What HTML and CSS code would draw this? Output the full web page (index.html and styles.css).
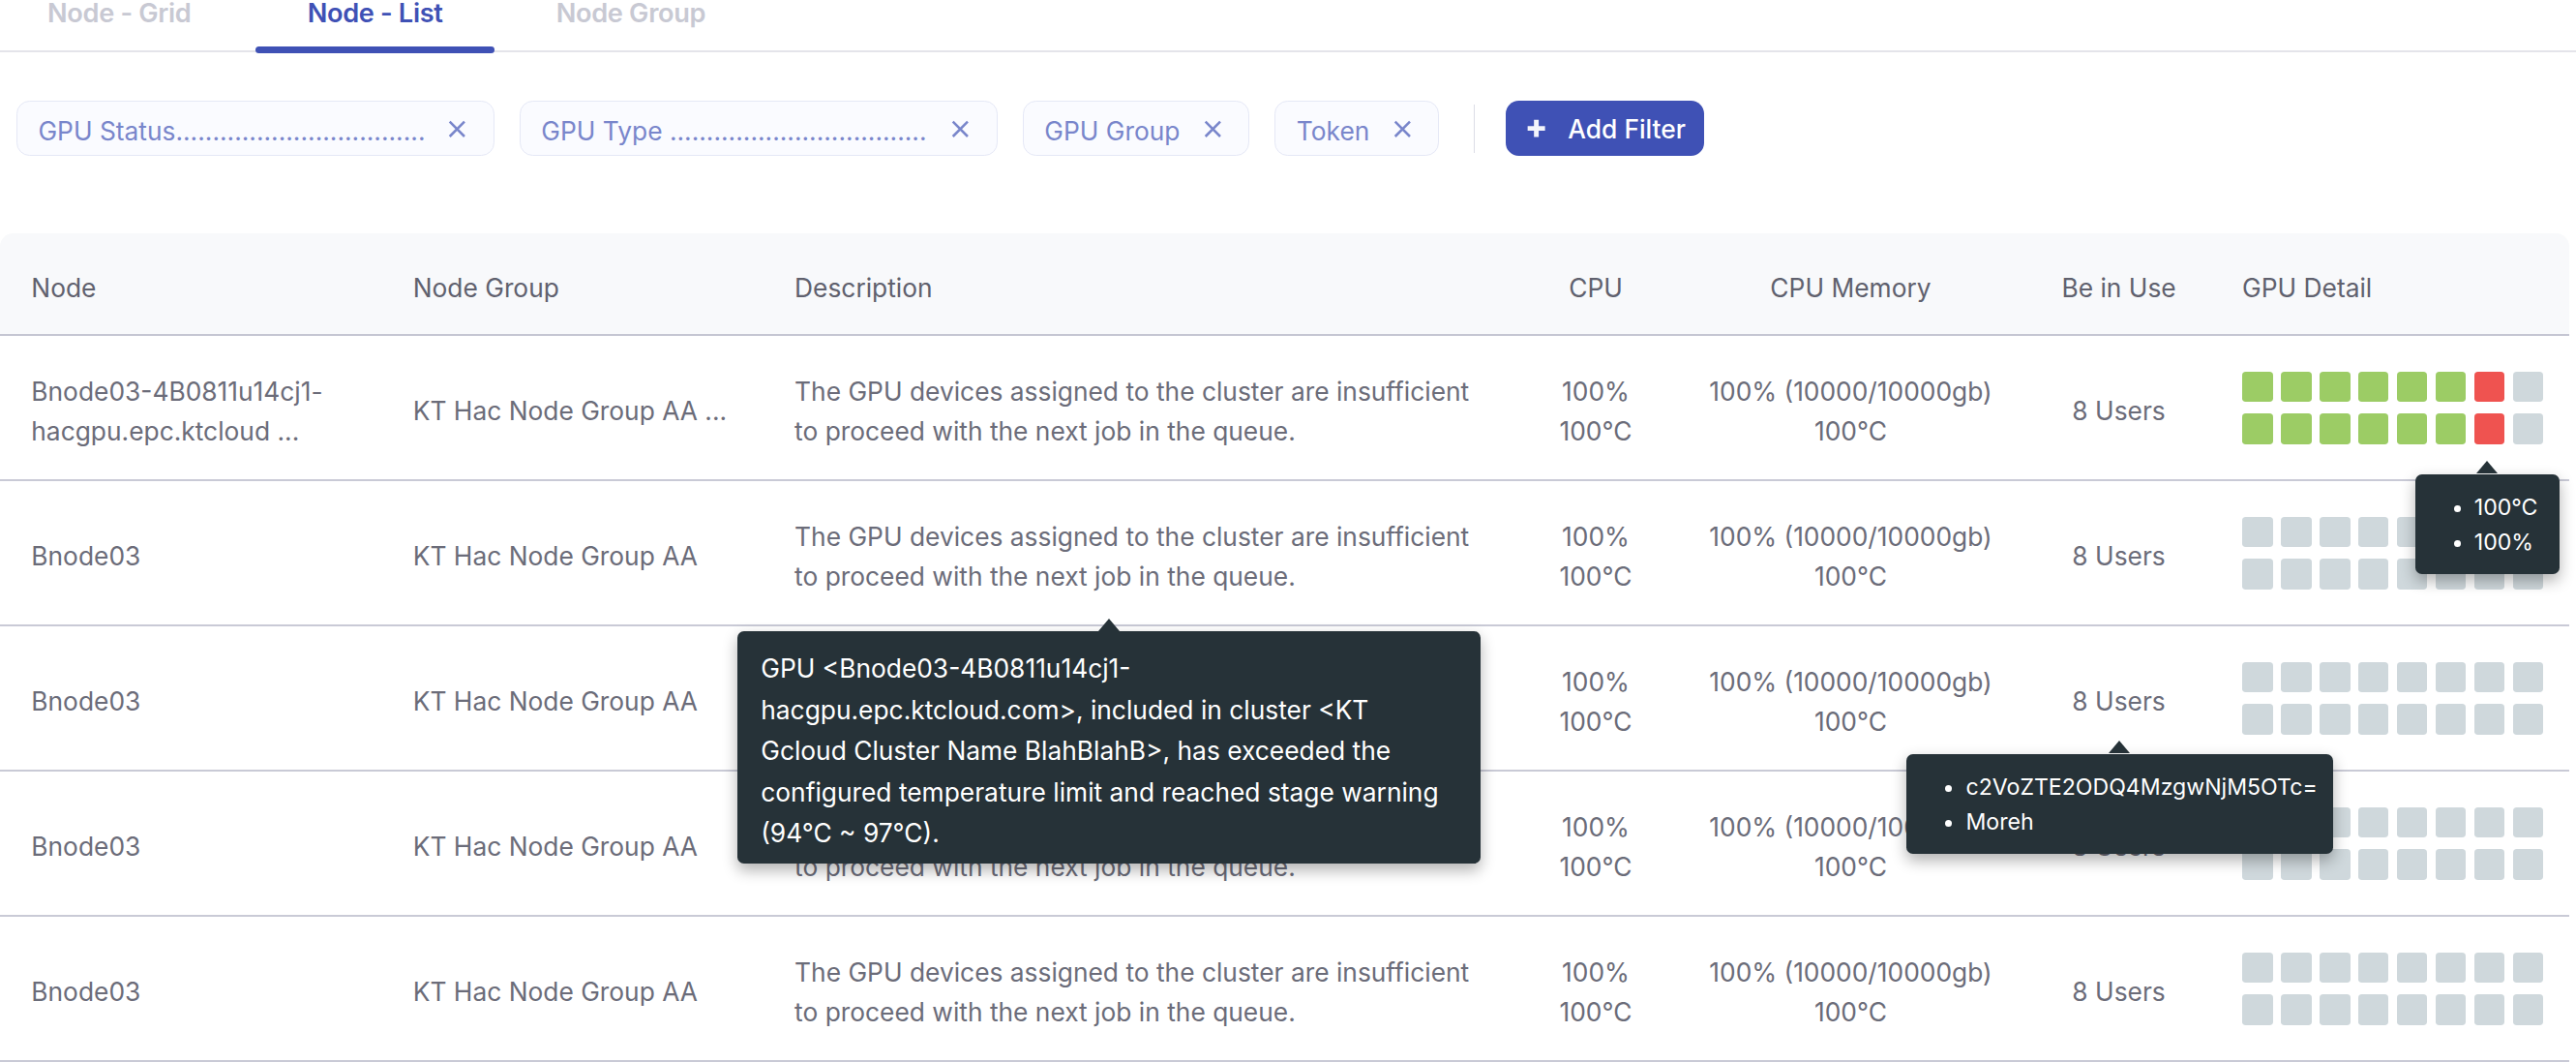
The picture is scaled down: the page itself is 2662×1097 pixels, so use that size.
FILE: index.html
```html
<!DOCTYPE html>
<html lang="en">
<head>
<meta charset="utf-8">
<title>Node - List</title>
<link rel="stylesheet" href="styles.css">
</head>
<body>
<div class="page">
  <nav class="tabs">
    <a class="tab">Node - Grid</a>
    <a class="tab active">Node - List</a>
    <a class="tab">Node Group</a>
  </nav>

  <div class="filters">
    <div class="chip chip-wide"><span class="chip-label">GPU Status.......................................................................</span><svg class="chip-x" viewBox="0 0 11 11"><path d="M1 1L10 10M10 1L1 10"/></svg></div>
    <div class="chip chip-wide"><span class="chip-label">GPU Type .......................................................................</span><svg class="chip-x" viewBox="0 0 11 11"><path d="M1 1L10 10M10 1L1 10"/></svg></div>
    <div class="chip"><span class="chip-label">GPU Group</span><svg class="chip-x" viewBox="0 0 11 11"><path d="M1 1L10 10M10 1L1 10"/></svg></div>
    <div class="chip"><span class="chip-label">Token</span><svg class="chip-x" viewBox="0 0 11 11"><path d="M1 1L10 10M10 1L1 10"/></svg></div>
    <div class="sep"></div>
    <button class="add-btn"><svg class="plus" viewBox="0 0 13 13"><path d="M6.5 1V12M1 6.5H12"/></svg><span class="btn-label">Add Filter</span></button>
  </div>

  <div class="table">
    <div class="row head">
      <div class="cell">Node</div>
      <div class="cell">Node Group</div>
      <div class="cell">Description</div>
      <div class="cell c">CPU</div>
      <div class="cell c">CPU Memory</div>
      <div class="cell c">Be in Use</div>
      <div class="cell gpu-head">GPU Detail</div>
    </div>

    <div class="row">
      <div class="cell">Bnode03-4B0811u14cj1-hacgpu.epc.ktcloud ...</div>
      <div class="cell nw">KT Hac Node Group AA ...</div>
      <div class="cell desc">The GPU devices assigned to the cluster are insufficient<br>to proceed with the next job in the queue.</div>
      <div class="cell c">100%<br>100°C</div>
      <div class="cell c">100% (10000/10000gb)<br>100°C</div>
      <div class="cell c">8 Users</div>
      <div class="gpu">
        <div class="squares">
          <i class="sq g"></i><i class="sq g"></i><i class="sq g"></i><i class="sq g"></i><i class="sq g"></i><i class="sq g"></i><i class="sq r"></i><i class="sq"></i>
          <i class="sq g"></i><i class="sq g"></i><i class="sq g"></i><i class="sq g"></i><i class="sq g"></i><i class="sq g"></i><i class="sq r"></i><i class="sq"></i>
        </div>
      </div>
    </div>

    <div class="row">
      <div class="cell">Bnode03</div>
      <div class="cell nw">KT Hac Node Group AA</div>
      <div class="cell desc">The GPU devices assigned to the cluster are insufficient<br>to proceed with the next job in the queue.</div>
      <div class="cell c">100%<br>100°C</div>
      <div class="cell c">100% (10000/10000gb)<br>100°C</div>
      <div class="cell c">8 Users</div>
      <div class="gpu">
        <div class="squares">
          <i class="sq"></i><i class="sq"></i><i class="sq"></i><i class="sq"></i><i class="sq"></i><i class="sq"></i><i class="sq"></i><i class="sq"></i>
          <i class="sq"></i><i class="sq"></i><i class="sq"></i><i class="sq"></i><i class="sq"></i><i class="sq"></i><i class="sq"></i><i class="sq"></i>
        </div>
      </div>
    </div>

    <div class="row">
      <div class="cell">Bnode03</div>
      <div class="cell nw">KT Hac Node Group AA</div>
      <div class="cell desc">The GPU devices assigned to the cluster are insufficient<br>to proceed with the next job in the queue.</div>
      <div class="cell c">100%<br>100°C</div>
      <div class="cell c">100% (10000/10000gb)<br>100°C</div>
      <div class="cell c">8 Users</div>
      <div class="gpu">
        <div class="squares">
          <i class="sq"></i><i class="sq"></i><i class="sq"></i><i class="sq"></i><i class="sq"></i><i class="sq"></i><i class="sq"></i><i class="sq"></i>
          <i class="sq"></i><i class="sq"></i><i class="sq"></i><i class="sq"></i><i class="sq"></i><i class="sq"></i><i class="sq"></i><i class="sq"></i>
        </div>
      </div>
    </div>

    <div class="row">
      <div class="cell">Bnode03</div>
      <div class="cell nw">KT Hac Node Group AA</div>
      <div class="cell desc">The GPU devices assigned to the cluster are insufficient<br>to proceed with the next job in the queue.</div>
      <div class="cell c">100%<br>100°C</div>
      <div class="cell c">100% (10000/10000gb)<br>100°C</div>
      <div class="cell c">8 Users</div>
      <div class="gpu">
        <div class="squares">
          <i class="sq"></i><i class="sq"></i><i class="sq"></i><i class="sq"></i><i class="sq"></i><i class="sq"></i><i class="sq"></i><i class="sq"></i>
          <i class="sq"></i><i class="sq"></i><i class="sq"></i><i class="sq"></i><i class="sq"></i><i class="sq"></i><i class="sq"></i><i class="sq"></i>
        </div>
      </div>
    </div>

    <div class="row">
      <div class="cell">Bnode03</div>
      <div class="cell nw">KT Hac Node Group AA</div>
      <div class="cell desc">The GPU devices assigned to the cluster are insufficient<br>to proceed with the next job in the queue.</div>
      <div class="cell c">100%<br>100°C</div>
      <div class="cell c">100% (10000/10000gb)<br>100°C</div>
      <div class="cell c">8 Users</div>
      <div class="gpu">
        <div class="squares">
          <i class="sq"></i><i class="sq"></i><i class="sq"></i><i class="sq"></i><i class="sq"></i><i class="sq"></i><i class="sq"></i><i class="sq"></i>
          <i class="sq"></i><i class="sq"></i><i class="sq"></i><i class="sq"></i><i class="sq"></i><i class="sq"></i><i class="sq"></i><i class="sq"></i>
        </div>
      </div>
    </div>
  </div>

  <div class="tip tip-temp">
    <ul><li>100°C</li><li>100%</li></ul>
  </div>

  <div class="tip tip-msg">GPU &lt;Bnode03-4B0811u14cj1-<br>hacgpu.epc.ktcloud.com&gt;, included in cluster &lt;KT<br>Gcloud Cluster Name BlahBlahB&gt;, has exceeded the<br>configured temperature limit and reached stage warning<br>(94°C ~ 97°C).</div>

  <div class="tip tip-users">
    <ul><li>c2VoZTE2ODQ4MzgwNjM5OTc=</li><li>Moreh</li></ul>
  </div>
</div>
</body>
</html>
```

FILE: styles.css
```css
html {
  zoom: 1.7;
}

body {
  margin: 0;
  font-family: Inter, "Noto Sans", sans-serif;
  background: #ffffff;
  color: #6b6c79;
}

.page {
  display: flow-root;
  position: relative;
  width: 1566px;
}

/* Tabs */
.tabs {
  display: flex;
  gap: 10.5px;
  margin-top: -5px;
  border-bottom: 1.4px solid #e4e4ea;
}

.tab {
  position: relative;
  width: 145px;
  box-sizing: border-box;
  text-align: center;
  font-size: 16px;
  letter-spacing: -0.2px;
  line-height: 24px;
  font-weight: 600;
  color: #c8c9d3;
  padding: 1.5px 0 9.9px;
}

.tab.active {
  color: #3f51b5;
}

.tab.active::after {
  content: "";
  position: absolute;
  left: 0;
  right: 0;
  bottom: -2px;
  height: 4.2px;
  border-radius: 2.1px;
  background: #3f51b5;
}

/* Filters */
.filters {
  display: flex;
  align-items: center;
  margin: 29.6px 0 0 10px;
}

.chip {
  display: flex;
  align-items: center;
  height: 33.6px;
  box-sizing: border-box;
  border: 1px solid #e5e8f6;
  background: #fafbff;
  border-radius: 8px;
  padding: 0 16.5px 0 12.6px;
  margin-right: 15.3px;
  color: #7986cb;
  font-size: 15.5px;
  line-height: 24px;
}

.chip-label {
  white-space: nowrap;
  padding-top: 3px;
}

.chip-wide .chip-label {
  width: 235px;
  overflow: hidden;
}

.chip-x {
  width: 11px;
  height: 11px;
  margin: 1px 0 0 14.3px;
  stroke: #7986cb;
  stroke-width: 1.5;
  fill: none;
  flex: none;
}

.sep {
  width: 1px;
  height: 29.4px;
  background: #dcdde6;
  margin: 0 18.5px 0 5.5px;
}

.add-btn {
  display: flex;
  align-items: center;
  gap: 13px;
  height: 33.6px;
  padding: 0 11px 0 12.4px;
  border: none;
  border-radius: 8px;
  background: #3f51b5;
  color: #ffffff;
  font-family: Inter, "Noto Sans", sans-serif;
  font-size: 15.5px;
  font-weight: 500;
  line-height: 24px;
}

.btn-label {
  padding-top: 1.5px;
}

.plus {
  width: 12.5px;
  height: 12.5px;
  stroke: #f3f4fb;
  stroke-width: 3;
  fill: none;
}

/* Table */
.table {
  margin-top: 47px;
  width: 1562px;
}

.row {
  display: grid;
  grid-template-columns: 232px 232px 450px 112px 198px 128px 210px;
  align-items: center;
  height: 88.2px;
  box-sizing: border-box;
  border-bottom: 1.2px solid #c9cad6;
  font-size: 15.5px;
  line-height: 24px;
}

.row.head {
  height: 62.6px;
  background: #f8f9fb;
  border-radius: 8px 8px 0 0;
  border-bottom: 1.5px solid #c5c6d2;
  color: #60616e;
}

.cell {
  padding: 4px 19px 0;
}

.row.head .cell {
  padding-top: 5px;
}

.cell.nw {
  white-space: nowrap;
}

.cell.desc {
  padding-right: 0;
  white-space: nowrap;
}

.cell.c {
  text-align: center;
  padding-left: 0;
  padding-right: 0;
}

.cell.gpu-head {
  padding-left: 11px;
  padding-right: 0;
}

.gpu {
  padding-left: 11px;
}

.squares {
  display: grid;
  grid-template-columns: repeat(8, 18.6px);
  column-gap: 4.9px;
  row-gap: 7px;
}

.sq {
  display: block;
  height: 18.6px;
  border-radius: 2.2px;
  background: #cfd8dc;
}

.sq.g {
  background: #9ccc65;
}

.sq.r {
  background: #ef5350;
}

/* Tooltips */
.tip {
  position: absolute;
  box-sizing: border-box;
  background: #263238;
  color: #ffffff;
  border-radius: 4px;
  box-shadow: 0 4px 9px rgba(0, 0, 0, 0.3);
}

.tip::before {
  content: "";
  position: absolute;
  top: -8px;
  border-left: 6.5px solid transparent;
  border-right: 6.5px solid transparent;
  border-bottom: 8px solid #263238;
}

.tip ul {
  margin: 0;
  padding: 9.5px 0 0 36px;
  font-size: 13.6px;
  line-height: 21.6px;
}

.tip-temp {
  left: 1468px;
  top: 288px;
  width: 88px;
  height: 61px;
}

.tip-temp::before {
  left: 37.5px;
}

.tip-users {
  left: 1159px;
  top: 458px;
  width: 259px;
  height: 61px;
}

.tip-users::before {
  left: 122.5px;
}

.tip-msg {
  left: 448px;
  top: 383.6px;
  width: 452px;
  height: 141.4px;
  padding: 10px 14.5px 8px;
  font-size: 15.5px;
  line-height: 25px;
  white-space: nowrap;
}

.tip-msg::before {
  left: 219.5px;
}
```
